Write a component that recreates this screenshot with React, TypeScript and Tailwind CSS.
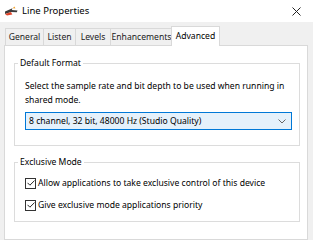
const tabs = [
  { label: 'General', w: 'w-[39px]' },
  { label: 'Listen', w: 'w-[33px]' },
  { label: 'Levels', w: 'w-[36px]' },
  { label: 'Enhancements', w: 'w-[63px]' },
];

const CheckRow = ({ label }: { label: string }) => (
  <label className="flex items-center gap-[2px] h-[14px]">
    <span className="w-[11px] h-[11px] border border-[#333333] bg-white flex items-center justify-center shrink-0">
      <svg width="8" height="6" viewBox="0 0 8 6" fill="none">
        <path d="M0.5 2.8 L2.9 5.2 L7.5 0.6" stroke="#262626" strokeWidth="1" />
      </svg>
    </span>
    <span className="whitespace-nowrap">{label}</span>
  </label>
);

const App = () => {
  return (
    <div
      className="w-[313px] h-[240px] bg-[#f0f0f0] overflow-hidden flex flex-col text-[8.6px] leading-[14px] text-black"
      style={{ fontFamily: '"Noto Sans", "Open Sans", sans-serif' }}
    >
      {/* Title bar */}
      <div className="h-[22px] bg-white flex items-center pl-[4px] pr-[12px] shrink-0">
        <svg width="15" height="10" viewBox="0 0 15 10">
          <path d="M1 5.5 L8.5 2.2 L7.8 4 L13.5 4.4 L12.8 6.2 L7 6 L1 8 Z" fill="#3c3c3c" />
          <path d="M1 8 L7 6 L8.3 8.4 L3 9.6 Z" fill="#e0452a" />
          <path d="M8.5 2.2 L10.6 0.6 L11.4 2.6 Z" fill="#f3a632" />
        </svg>
        <span className="ml-[3px] text-[9.5px]">Line Properties</span>
        <svg className="ml-auto" width="9" height="9" viewBox="0 0 9 9">
          <path d="M0.5 0.5 L8.5 8.5 M8.5 0.5 L0.5 8.5" stroke="#222" strokeWidth="1" />
        </svg>
      </div>

      {/* Tabs */}
      <div className="flex items-end pl-[5px] pt-[4px] shrink-0 relative z-10">
        {tabs.map((t) => (
          <div
            key={t.label}
            className={`${t.w} h-[17px] -mr-px border border-b-0 border-[#d9d9d9] bg-[#f0f0f0] flex items-center justify-center text-[#1a1a1a]`}
          >
            {t.label}
          </div>
        ))}
        <div className="w-[49px] h-[20px] -mb-px -ml-[1px] border border-b-0 border-[#d9d9d9] bg-white flex items-center justify-center pb-[1px]">
          Advanced
        </div>
      </div>

      {/* Panel */}
      <div className="flex-1 ml-[4px] w-[304px] bg-white border border-[#d9d9d9] pl-[9px] pr-[7px] pt-[10px]">
        <fieldset className="border border-[#dcdcdc] pl-[10px] pr-[7px] pb-[15px]">
          <legend className="-ml-[7px] px-[2px]">Default Format</legend>
          <p className="pt-[9px] pr-[6px]">
            Select the sample rate and bit depth to be used when running in shared mode.
          </p>
          <div className="mt-[5px] h-[18px] border border-[#0078d7] bg-[#e5f1fb] flex items-center pl-[3px] pr-[5px]">
            <span>8 channel, 32 bit, 48000 Hz (Studio Quality)</span>
            <svg className="ml-auto" width="8" height="5" viewBox="0 0 8 5">
              <path d="M0.5 0.5 L4 4 L7.5 0.5" stroke="#666" fill="none" />
            </svg>
          </div>
        </fieldset>

        <fieldset className="mt-[9px] border border-[#dcdcdc] pl-[10px] pr-[7px] pb-[9px]">
          <legend className="-ml-[7px] px-[2px]">Exclusive Mode</legend>
          <div className="flex flex-col gap-[8px] pt-[7px]">
            <CheckRow label="Allow applications to take exclusive control of this device" />
            <CheckRow label="Give exclusive mode applications priority" />
          </div>
        </fieldset>
      </div>
    </div>
  );
};

export default App;
